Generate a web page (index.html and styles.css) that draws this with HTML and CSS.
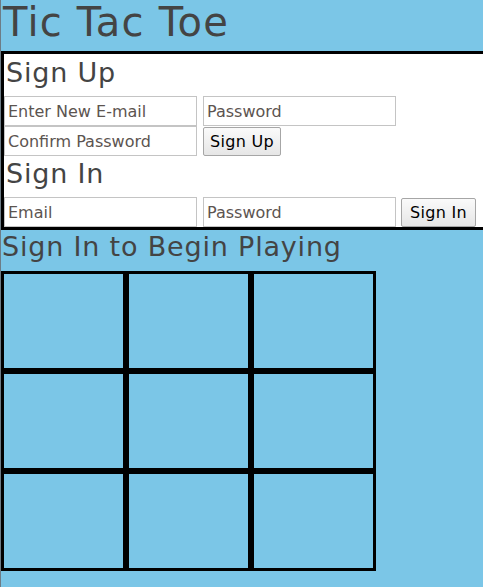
FILE: index.html
```html
<!DOCTYPE html>
<html lang="en">
<head>
<meta charset="utf-8">
<title>Tic Tac Toe</title>
<link rel="stylesheet" href="styles.css">
</head>
<body>
  <h1 class="title">Tic Tac Toe</h1>
  <section class="auth">
    <h2 class="auth-heading">Sign Up</h2>
    <form class="auth-form">
      <div class="row">
        <input class="field" type="email" placeholder="Enter New E-mail">
        <input class="field" type="password" placeholder="Password">
      </div>
      <div class="row">
        <input class="field" type="password" placeholder="Confirm Password">
        <button class="btn" type="button">Sign Up</button>
      </div>
    </form>
    <h2 class="auth-heading">Sign In</h2>
    <form class="auth-form">
      <div class="row">
        <input class="field" type="email" placeholder="Email">
        <input class="field" type="password" placeholder="Password">
        <button class="btn btn-signin" type="button">Sign In</button>
      </div>
    </form>
  </section>
  <h2 class="status">Sign In to Begin Playing</h2>
  <div class="board">
    <div class="cell"></div><div class="cell"></div><div class="cell"></div>
    <div class="cell"></div><div class="cell"></div><div class="cell"></div>
    <div class="cell"></div><div class="cell"></div><div class="cell"></div>
  </div>
</body>
</html>
```
FILE: styles.css
```css
html, body {
  margin: 0;
  padding: 0;
}
body {
  background: #7bc6e7;
  border-left: 1px solid #6d7c86;
  min-height: 587px;
  box-sizing: border-box;
  overflow: hidden;
  font-family: "DejaVu Sans", Verdana, sans-serif;
  color: #444;
}
.title {
  margin: 0 0 6px 2px;
  font-size: 40px;
  line-height: 45px;
  font-weight: normal;
  letter-spacing: 0.03em;
}
.auth {
  background: #fff;
  border: 3px solid #000;
  border-right: none;
}
.auth-heading {
  margin: 0 0 5px 2px;
  font-size: 27px;
  line-height: 37px;
  font-weight: normal;
  letter-spacing: 0.03em;
}
.auth-heading + .auth-form + .auth-heading {
  margin-top: -1px;
}
.auth-form {
  margin: 0;
}
.row {
  display: flex;
  align-items: center;
  gap: 6px;
}
.field {
  box-sizing: border-box;
  width: 193px;
  height: 30px;
  margin: 0;
  padding: 0 3px;
  border: 1px solid #c4c4c4;
  font-family: "DejaVu Sans", Verdana, sans-serif;
  font-size: 16px;
  color: #333;
  background: #fff;
}
.field::placeholder {
  color: #5c5450;
  opacity: 1;
}
.btn {
  box-sizing: border-box;
  height: 29px;
  margin: 0;
  padding: 0 6px;
  border: 1px solid #a6a6a6;
  border-radius: 2px;
  background: linear-gradient(#fafafa, #e6e6e6);
  font-family: "DejaVu Sans", Verdana, sans-serif;
  font-size: 16px;
  color: #000;
  letter-spacing: 0.02em;
}
.btn-signin {
  margin-left: -1px;
  padding: 0 8px;
}
.status {
  margin: 0 0 8px 1px;
  font-size: 27px;
  line-height: 33px;
  font-weight: normal;
  letter-spacing: 0.03em;
}
.board {
  display: grid;
  grid-template-columns: repeat(3, 125px);
  grid-auto-rows: 100px;
}
.cell {
  box-sizing: border-box;
  border: 3px solid #000;
}
```
